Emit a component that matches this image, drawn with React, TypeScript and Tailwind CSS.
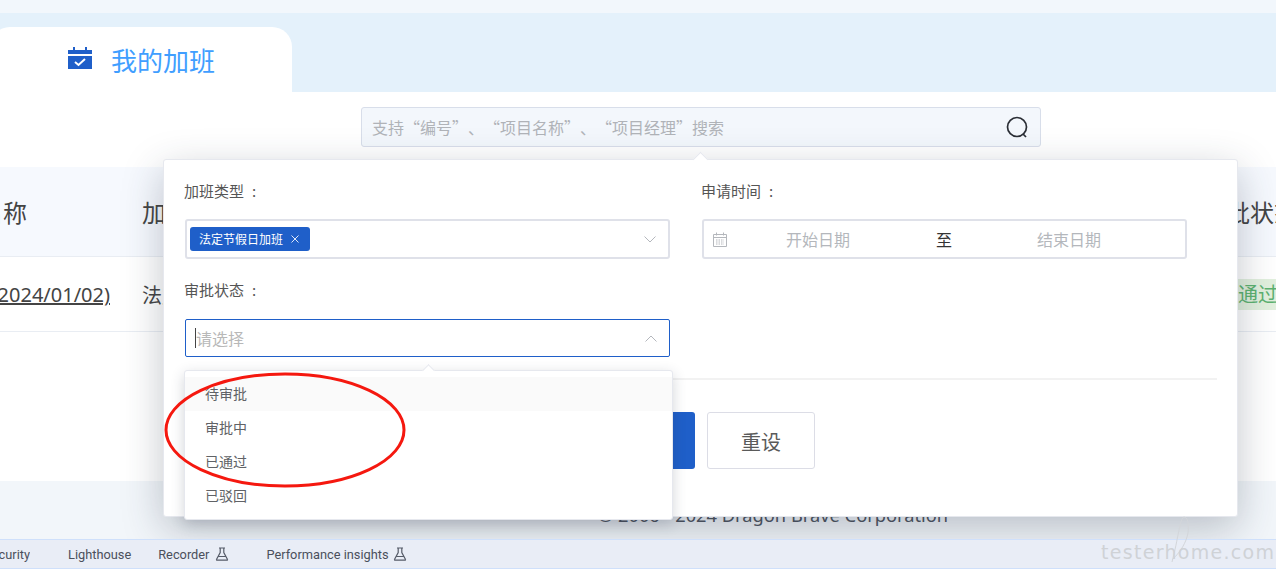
import React from "react";

const cjk = { fontFamily: '"Noto Sans CJK SC", "Noto Sans", sans-serif' };

function Flask({ className }: { className?: string }) {
  return (
    <svg viewBox="0 0 14 14" className={className} fill="none" stroke="#555b68" strokeWidth="1.2">
      <path d="M4 1h6M5.200 1v4.500L1.600 12.200c-.3.500 0 1 .5 1h9.800c.5 0 .8-.5.5-1L8.800 5.500V1M3.500 9.500h7" />
    </svg>
  );
}

function Chevron({ up }: { up?: boolean }) {
  return (
    <svg viewBox="0 0 12 7" className="w-[12px] h-[7px]" fill="none" stroke="#b4b7bd" strokeWidth="1">
      <path d={up ? "M.5 6.500 6 1l5.500 5.500" : "M.5.5 6 6 11.500.5"} />
    </svg>
  );
}

function Label({ text }: { text: string }) {
  return (
    <>
      {text}
      <span className="ml-[8px]">:</span>
    </>
  );
}

export default function App() {
  return (
    <div className="relative w-[1276px] h-[578px] overflow-hidden bg-white flex flex-col" style={cjk}>
      <div className="h-[13px] bg-[#f2f7fc]" />
      <div className="h-[79px] bg-[#e4f1fb] flex items-end">
        <div className="w-[302px] -ml-[10px] h-[65px] bg-white rounded-t-[20px] flex items-center pl-[78px] gap-[19px]">
          <svg viewBox="0 0 24 22" className="w-[24px] h-[22px] -mt-[3px]">
            <path fill="#1f5fc9" d="M0 3h5V0h2v3h10V0h2v3h5v4H0zM0 9h24v13H0z" />
            <path fill="none" stroke="#fff" strokeWidth="2" d="m7 15 3.500 3L17 12" />
          </svg>
          <span className="text-[26px] leading-[36px] text-[#409eff]">我的加班</span>
        </div>
      </div>
      <div className="h-[75px] pl-[361px] pt-[15px]">
        <div className="w-[680px] h-[40px] bg-[#f3f7fc] border border-[#d8deea] rounded-[3px] flex items-center justify-between pl-[10px] pr-[11px]">
          <span className="text-[16px] text-[#b0b3b8] whitespace-pre [text-spacing-trim:space-all] [font-feature-settings:'chws'_0]">支持“编号”、“项目名称”、“项目经理”搜索</span>
          <svg viewBox="0 0 24 24" className="w-[24px] h-[24px]" fill="none" stroke="#2b2f36" strokeWidth="1.700">
            <circle cx="12" cy="12" r="9.500" />
            <path d="m18 19 3 3" />
          </svg>
        </div>
      </div>
      <div className="h-[90px] bg-[#f6f9fe] border-b border-[#e9edf3] flex items-center text-[24px] text-[#444]">
        <span className="w-[27px] overflow-hidden flex justify-end whitespace-nowrap">名称</span>
        <span className="ml-[115px]">加班类型</span>
        <span className="ml-auto whitespace-nowrap -mr-[22px]">审批状态</span>
      </div>
      <div className="h-[75px] border-b border-[#e9edf3] flex items-center text-[20px] text-[#444]">
        <span className="mt-[2px] w-[110px] overflow-hidden flex justify-end underline whitespace-nowrap" style={{ fontFamily: '"Noto Sans", sans-serif' }}>
          (2024/01/02)
        </span>
        <span className="mt-[2px] ml-[32px] whitespace-nowrap">法定节假日加班</span>
        <span className="ml-auto h-[31px] w-[62px] -mr-[2px] bg-[#e2f0de] text-[#5cb270] flex items-center pl-[2px] whitespace-nowrap">
          已通过
        </span>
      </div>
      <div className="h-[149px]" />
      <div className="h-[58px] bg-[#f2f6fa] pt-[20px] pl-[598px] text-[18.300px] text-[#4d5360] whitespace-nowrap" style={{ fontFamily: '"Noto Sans", sans-serif' }}>
        © 2006 - 2024 Dragon Brave Corporation
      </div>
      <div className="relative z-10 h-[30px] bg-[#e9edf6] border-y border-[#cfe0fb] flex items-center text-[12.800px] text-[#4b505c] pt-[2px]" style={{ fontFamily: 'Roboto, sans-serif' }}>
        <span className="w-[30px] overflow-hidden flex justify-end">Security</span>
        <span className="ml-[38px]">Lighthouse</span>
        <span className="ml-[27px]">Recorder</span>
        <Flask className="ml-[6px] w-[14px] h-[14px] -mt-[2px]" />
        <span className="ml-[37px]">Performance insights</span>
        <Flask className="ml-[4px] w-[14px] h-[14px] -mt-[2px]" />
      </div>
      <div className="relative z-10 flex-1 bg-white" />

      {/* search filter popover */}
      <div className="absolute left-[163px] top-[159px] w-[1075px] h-[358px] bg-white border border-[#e6e8ee] rounded-[3px] shadow-[0_12px_40px_rgba(40,50,70,0.28)] pt-[20px] pl-[20px] pr-[20px]">
        <div className="absolute left-[531px] -top-[6px] w-[11px] h-[11px] rotate-45 bg-white border-l border-t border-[#e6e8ee]" />
        <div className="flex">
          <div className="w-[518px] shrink-0">
            <div className="text-[15px] leading-[22px] text-[#555]"><Label text="加班类型" /></div>
            <div className="mt-[17px] ml-[1px] w-[485px] h-[40px] border-2 border-[#dfe1e9] rounded-[3px] flex items-center justify-between pl-[3px] pr-[12px]">
              <span className="h-[24px] w-[120px] bg-[#1f5fc9] rounded-[3px] text-white text-[12px] flex items-center pl-[9px] gap-[8px]">
                法定节假日加班
                <svg viewBox="0 0 8 8" className="w-[8px] h-[8px]" fill="none" stroke="#dfe8f8" strokeWidth="1"><path d="m.5.5 7 7M7.500.5l-7 7" /></svg>
              </span>
              <Chevron />
            </div>
            <div className="mt-[20px] text-[15px] leading-[22px] text-[#555]"><Label text="审批状态" /></div>
            <div className="mt-[18px] ml-[1px] w-[485px] h-[38px] border border-[#1f5fc9] rounded-[2px] flex items-center justify-between pl-[9px] pr-[12px]">
              <span className="border-l border-[#444] text-[16px] leading-[20px] text-[#b8b8b8]">请选择</span>
              <Chevron up />
            </div>
          </div>
          <div className="flex-1">
            <div className="-ml-[1px] text-[15px] leading-[22px] text-[#555]"><Label text="申请时间" /></div>
            <div className="mt-[17px] w-[485px] h-[40px] border-2 border-[#dfe1e9] rounded-[3px] flex items-center text-[16px] text-[#b4b7bc]">
              <svg viewBox="0 0 14 15" className="ml-[9px] w-[14px] h-[15px]" fill="none" stroke="#b4b7bc" strokeWidth="1">
                <path d="M.500 2.500h13v12H.500zM.500 5.500h13M3.500.5v3M10.500.5v3" />
                <path strokeDasharray="1.500 1" d="M3 8h8M3 10h8M3 12h8" />
              </svg>
              <span className="ml-[59px] w-[150px]">开始日期</span>
              <span className="text-[#333] w-[101px]">至</span>
              <span>结束日期</span>
            </div>
          </div>
        </div>
        <div className="mt-[21px] w-[1033px] h-[2px] bg-[#f2f2f2]" />
        <div className="mt-[32px] flex justify-end w-[631px] gap-[12px]">
          <div className="w-[110px] h-[57px] bg-[#1f5fc9] rounded-[3px]" />
          <div className="w-[108px] h-[57px] border border-[#dcdde6] rounded-[3px] bg-white text-[20px] text-[#5a5a5a] flex items-center justify-center pt-[3px]">重设</div>
        </div>
      </div>

      {/* dropdown */}
      <div className="absolute left-[184px] top-[370px] w-[489px] h-[150px] bg-white border border-[#e6e8ee] rounded-[3px] shadow-[0_4px_14px_rgba(40,50,70,0.2)] pt-[6px] text-[14px] text-[#606266]">
        <div className="absolute left-[239px] -top-[5px] w-[9px] h-[9px] rotate-45 bg-white border-l border-t border-[#e6e8ee]" />
        <div className="relative h-[34px] bg-[#fafafa] flex items-center pl-[20px] pb-[2px]">待审批</div>
        <div className="h-[34px] flex items-center pl-[20px] pb-[2px]">审批中</div>
        <div className="h-[34px] flex items-center pl-[20px] pb-[2px]">已通过</div>
        <div className="h-[34px] flex items-center pl-[20px] pb-[2px]">已驳回</div>
      </div>

      {/* hand-drawn annotation */}
      <svg viewBox="0 0 1276 578" className="absolute inset-0 z-20 w-[1276px] h-[578px] pointer-events-none" fill="none">
        <ellipse cx="285" cy="430" rx="119" ry="56" stroke="#f5180f" strokeWidth="3" />
        <path d="M1172 562C1178 540 1180 517 1184 517C1189 517 1190 530 1186 540C1182 550 1176 556 1172 560" stroke="#d3d6da" strokeWidth="1" />
      </svg>

      {/* watermark */}
      <div className="absolute z-20 left-[1101px] top-[537px] text-[19px] leading-[30px] tracking-[1.300px] text-[#cfd2d6] whitespace-nowrap pointer-events-none" style={{ fontFamily: '"DejaVu Sans", sans-serif' }}>
        testerhome.com
      </div>
    </div>
  );
}
